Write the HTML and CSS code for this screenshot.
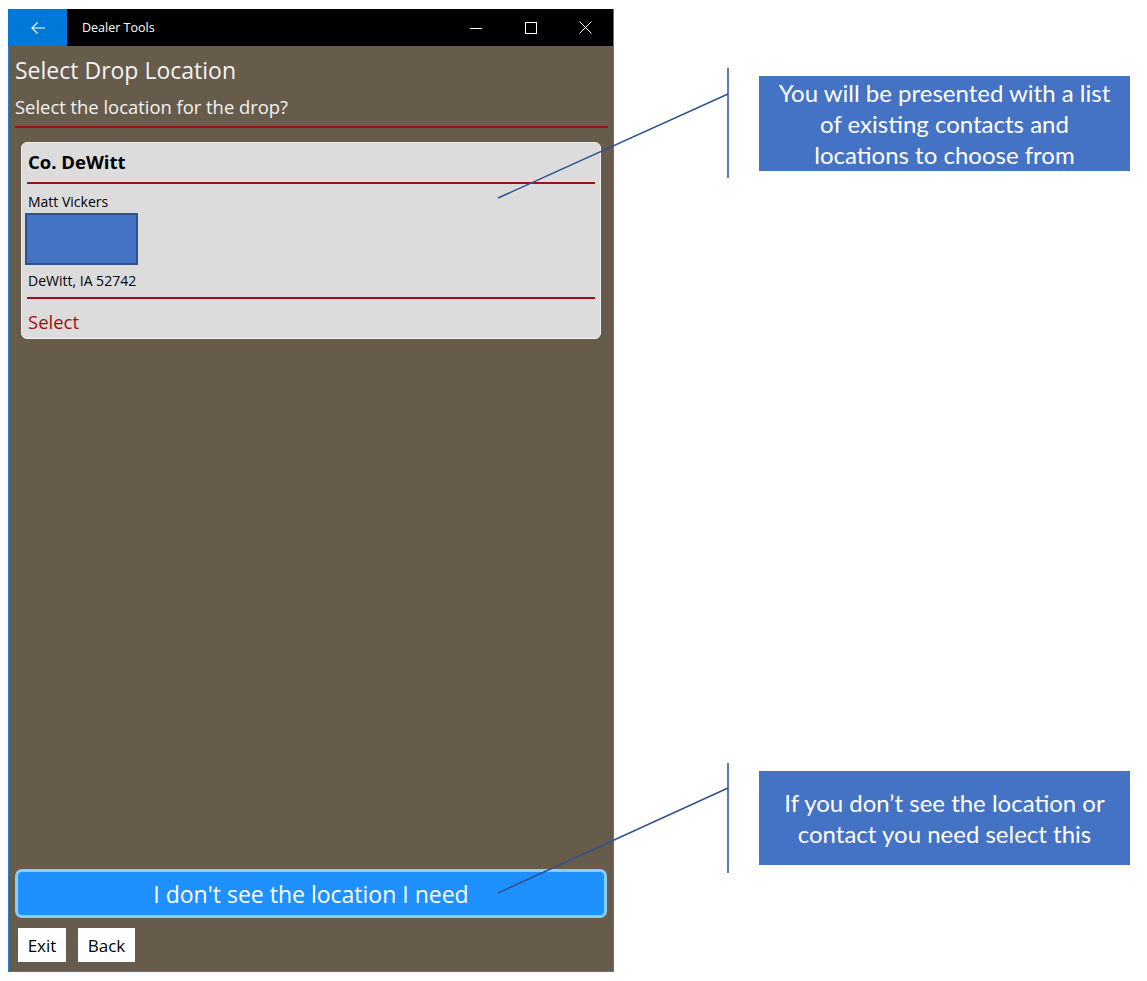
FILE: index.html
```html
<!DOCTYPE html>
<html lang="en">
<head>
<meta charset="utf-8">
<title>Dealer Tools</title>
<link rel="stylesheet" href="styles.css">
</head>
<body>
<div class="stage">
  <div class="window">
    <div class="titlebar">
      <div class="back-btn">
        <svg width="16" height="16" viewBox="0 0 16 16"><path d="M15 8H2M7.5 2.5L2 8l5.5 5.5" fill="none" stroke="#fff" stroke-width="1.2"/></svg>
      </div>
      <div class="app-title">Dealer Tools</div>
      <div class="controls">
        <span class="ctl"><svg width="12" height="12" viewBox="0 0 12 12"><path d="M0 6.5h12" stroke="#fff" stroke-width="1"/></svg></span>
        <span class="ctl"><svg width="12" height="12" viewBox="0 0 12 12"><rect x="0.5" y="0.5" width="11" height="11" fill="none" stroke="#fff" stroke-width="1"/></svg></span>
        <span class="ctl"><svg width="13" height="13" viewBox="0 0 13 13"><path d="M0.5 0.5l12 12M12.5 0.5l-12 12" stroke="#fff" stroke-width="1"/></svg></span>
      </div>
    </div>
    <div class="content">
      <h1 class="page-title">Select Drop Location</h1>
      <div class="page-sub">Select the location for the drop?</div>
      <div class="rule"></div>
      <div class="card">
        <div class="card-title">Co. DeWitt</div>
        <div class="card-rule"></div>
        <div class="card-line first">Matt Vickers</div>
        <div class="map-box"></div>
        <div class="card-line second">DeWitt, IA 52742</div>
        <div class="card-rule lower"></div>
        <div class="card-select">Select</div>
      </div>
      <div class="spacer"></div>
      <div class="big-btn">I don't see the location I need</div>
      <div class="nav-row">
        <div class="nav-btn exit">Exit</div>
        <div class="nav-btn back">Back</div>
      </div>
    </div>
  </div>

  <svg class="annot" width="1147" height="981" viewBox="0 0 1147 981">
    <path d="M728 68V178M728 94L498 198" fill="none" stroke="#2f528f" stroke-width="1.5"/>
    <path d="M728 763V873M728 788L498 893" fill="none" stroke="#2f528f" stroke-width="1.5"/>
  </svg>
  <div class="callout callout-1">You will be presented with a list of existing contacts and locations to choose from</div>
  <div class="callout callout-2">If you don’t see the location or contact you need select this</div>
</div>
</body>
</html>
```

FILE: styles.css
```css
* { box-sizing: border-box; }
html, body { margin: 0; padding: 0; background: #fff; }
body { width: 1147px; height: 981px; overflow: hidden; font-family: "Open Sans", "Noto Sans", sans-serif; }
.stage { position: relative; width: 1147px; height: 981px; padding: 9px 0 0 8px; }

.window {
  width: 606px; height: 963px;
  border: 1px solid #2b7cd3;
  border-top: none;
  display: flex; flex-direction: column;
  background: #675c4b;
}
.titlebar { height: 37px; background: #000; display: flex; align-items: center; flex: none; }
.back-btn { width: 59px; height: 37px; background: #0078d7; display: flex; align-items: center; justify-content: center; margin-left: -1px; }
.app-title { color: #fff; font-size: 12.5px; margin-left: 15px; flex: 1; }
.controls { display: flex; height: 100%; }
.ctl { width: 55px; display: flex; align-items: center; justify-content: center; }

.content { flex: 1; display: flex; flex-direction: column; padding: 0 5px 9px 6px; }
.page-title { margin: 9px 0 0; font-weight: 400; font-size: 23px; line-height: 30px; color: #f3f3f3; }
.page-sub { margin-top: 10px; font-size: 18.4px; line-height: 24px; color: #f3f3f3; }
.rule { height: 2px; background: #9b1111; margin-top: 7px; }

.card {
  margin: 14px 7px 0 6px;
  background: #dcdcdc;
  border: 1px solid #f0f0f0;
  border-radius: 6px;
  padding: 7px 5px 3px 5px;
  color: #000;
}
.card-title { font-weight: 700; font-size: 18.5px; line-height: 24px; padding-left: 1px; }
.card-rule { height: 2px; background: #a01010; margin-top: 8px; }
.card-rule.lower { margin-top: 7px; }
.card-line { font-size: 14px; line-height: 18px; padding-left: 1px; }
.card-line.first { margin-top: 9px; }
.card-line.second { margin-top: 7px; }
.map-box { width: 113px; height: 52px; background: #4472c4; border: 2px solid #2f528f; margin: 2px 0 0 -2px; }
.card-select { color: #a01010; font-size: 18.5px; line-height: 26px; margin-top: 10px; padding-left: 1px; }

.spacer { flex: 1; }
.big-btn {
  height: 49px; margin: 0 1px 0 0;
  background: #1e90ff;
  border: 3px solid #87cefa;
  border-radius: 7px;
  color: #fff; font-size: 23px;
  display: flex; align-items: center; justify-content: center;
}
.nav-row { display: flex; gap: 12px; margin-top: 10px; padding-left: 3px; }
.nav-btn { background: #fff; color: #000; height: 34px; font-size: 17px; display: flex; align-items: center; justify-content: center; }
.nav-btn.exit { width: 48px; }
.nav-btn.back { width: 57px; }

.annot { position: absolute; left: 0; top: 0; pointer-events: none; }
.callout {
  position: absolute; left: 759px; width: 371px;
  background: #4472c4; color: #fff;
  font-family: "Lato", "Open Sans", sans-serif;
  font-size: 24px; line-height: 31px; text-align: center;
  display: flex; align-items: center; justify-content: center;
}
.callout-1 { top: 76px; height: 95px; padding: 0 16px; }
.callout-2 { top: 771px; height: 94px; padding: 0 16px; }
```
